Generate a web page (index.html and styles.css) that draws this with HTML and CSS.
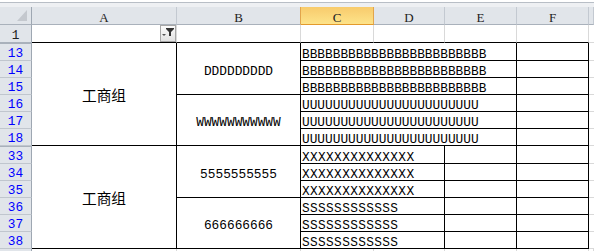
FILE: index.html
```html
<!DOCTYPE html>
<html lang="zh-CN">
<head>
    <meta charset="UTF-8">
    <meta name="viewport" content="width=device-width, initial-scale=1.0">
    <title>工作表</title>
    <link rel="stylesheet" href="styles.css">
</head>
<body>
    <div class="sheet">
        <div class="top-bar"></div>

        <!-- 列标题 -->
        <div class="col-head corner">
            <svg width="31" height="17" viewBox="0 0 31 17"><polygon points="27,3 27,14 17,14" fill="#c4c8ce"/></svg>
        </div>
        <div class="col-head">A</div>
        <div class="col-head pre-sel">B</div>
        <div class="col-head sel">C</div>
        <div class="col-head">D</div>
        <div class="col-head">E</div>
        <div class="col-head">F</div>
        <div class="col-head"></div>

        <!-- 第1行 -->
        <div class="row-head plain">1</div>
        <div class="cell-top filter-cell">
            <div class="filter-btn">
                <svg width="14" height="15" viewBox="0 0 14 15">
                    <polygon points="1,8 5,8 3,10" fill="#555"/>
                    <polygon points="5,2 13,2 13,3 10,6 10,10 8,10 8,6 5,3" fill="#333"/>
                </svg>
            </div>
        </div>
        <div class="cell-top"></div>
        <div class="cell-top"></div>
        <div class="cell-top"></div>
        <div class="cell-top"></div>
        <div class="cell-top"></div>
        <div class="grid-cell"></div>

        <!-- 13 - 18 -->
        <div class="row-head gap">13</div>
        <div class="cell mid cn rows-6">工商组</div>
        <div class="cell mid rows-3">DDDDDDDDD</div>
        <div class="cell cols-3">BBBBBBBBBBBBBBBBBBBBBBBB</div>
        <div class="cell"></div>
        <div class="grid-cell"></div>

        <div class="row-head">14</div>
        <div class="cell cols-3">BBBBBBBBBBBBBBBBBBBBBBBB</div>
        <div class="cell"></div>
        <div class="grid-cell"></div>

        <div class="row-head">15</div>
        <div class="cell cols-3">BBBBBBBBBBBBBBBBBBBBBBBB</div>
        <div class="cell"></div>
        <div class="grid-cell"></div>

        <div class="row-head">16</div>
        <div class="cell mid rows-3">WWWWWWWWWWW</div>
        <div class="cell cols-3">UUUUUUUUUUUUUUUUUUUUUUU</div>
        <div class="cell"></div>
        <div class="grid-cell"></div>

        <div class="row-head">17</div>
        <div class="cell cols-3">UUUUUUUUUUUUUUUUUUUUUUU</div>
        <div class="cell"></div>
        <div class="grid-cell"></div>

        <div class="row-head">18</div>
        <div class="cell cols-3">UUUUUUUUUUUUUUUUUUUUUUU</div>
        <div class="cell"></div>
        <div class="grid-cell"></div>

        <!-- 33 - 38 -->
        <div class="row-head gap">33</div>
        <div class="cell mid cn rows-6">工商组</div>
        <div class="cell mid rows-3">5555555555</div>
        <div class="cell cols-2 wide">XXXXXXXXXXXXXX</div>
        <div class="cell"></div>
        <div class="cell"></div>
        <div class="grid-cell"></div>

        <div class="row-head">34</div>
        <div class="cell cols-2 wide">XXXXXXXXXXXXXX</div>
        <div class="cell"></div>
        <div class="cell"></div>
        <div class="grid-cell"></div>

        <div class="row-head">35</div>
        <div class="cell cols-2 wide">XXXXXXXXXXXXXX</div>
        <div class="cell"></div>
        <div class="cell"></div>
        <div class="grid-cell"></div>

        <div class="row-head">36</div>
        <div class="cell mid rows-3">666666666</div>
        <div class="cell cols-2 wide">SSSSSSSSSSSS</div>
        <div class="cell"></div>
        <div class="cell"></div>
        <div class="grid-cell"></div>

        <div class="row-head">37</div>
        <div class="cell cols-2 wide">SSSSSSSSSSSS</div>
        <div class="cell"></div>
        <div class="cell"></div>
        <div class="grid-cell"></div>

        <div class="row-head">38</div>
        <div class="cell cols-2 wide">SSSSSSSSSSSS</div>
        <div class="cell"></div>
        <div class="cell"></div>
        <div class="grid-cell"></div>

        <!-- 底部露出的一点 -->
        <div class="row-head tail"></div>
        <div class="tail-cell"></div>
        <div class="tail-cell"></div>
        <div class="tail-cell"></div>
        <div class="tail-cell"></div>
        <div class="tail-cell"></div>
        <div class="tail-cell"></div>
        <div class="tail-cell"></div>
    </div>
</body>
</html>
```

FILE: styles.css
```css
* {
    margin: 0;
    padding: 0;
    box-sizing: border-box;
}

body {
    background: #fff;
    color: #000;
    font-family: "Liberation Mono", "Noto Sans CJK SC", monospace;
    font-size: 12.8px;
}

/* 列宽和行高按截图像素来 */
.sheet {
    display: grid;
    grid-template-columns: 32px 145px 124px 73px 71px 72px 72px 5px;
    grid-template-rows: 7px 18px 18px 18px 17px 17px 17px 17px 17px 18px 17px 17px 17px 17px 17px 2px;
    width: 594px;
    height: 251px;
    overflow: hidden;
}

.top-bar {
    grid-column: 1 / -1;
    background: linear-gradient(#fff 0 2px, #b8bec6 2px 3px, #eef0f3 3px);
}

.col-head {
    background: #e1e5ea;
    border-right: 1px solid #c3c9d1;
    border-bottom: 1px solid #a9b1bb;
    color: #222;
    font-family: "Liberation Serif", serif;
    font-size: 13px;
    display: flex;
    align-items: flex-end;
    justify-content: center;
    line-height: 11px;
    padding-bottom: 1px;
}

.col-head.pre-sel {
    border-right-color: #e2a54c;
}

.col-head.sel {
    background: linear-gradient(#f8cb6c, #fde38a);
    border-right-color: #e2a54c;
    border-bottom-color: #e39a2c;
}

.corner {
    border-right-color: #9ea7b2;
    padding: 0;
}

.row-head {
    background: #e1e5ea;
    border-right: 1px solid #9ea7b2;
    border-bottom: 1px solid #c0c6ce;
    color: #0000ff;
    display: flex;
    align-items: flex-end;
    justify-content: center;
    line-height: 11px;
    padding-bottom: 1px;
}

.row-head.plain {
    color: #222;
    border-bottom-color: #a9b1bb;
}

/* 隐藏行的分隔线 */
.row-head.gap {
    border-top: 1px solid #a9b1bb;
}

.row-head.tail {
    border-bottom: none;
}

.cell-top {
    border-right: 1px solid #d9d9d9;
    border-bottom: 1px solid #000;
}

.filter-cell {
    display: flex;
    justify-content: flex-end;
}

.filter-btn {
    width: 16px;
    height: 17px;
    border: 1px solid #a7a7a7;
    background: linear-gradient(#fbfbfb, #e2e2e2);
}

.filter-btn svg {
    display: block;
}

.cell {
    border-right: 1px solid #000;
    border-bottom: 1px solid #000;
    display: flex;
    align-items: flex-end;
    line-height: 11px;
    padding-left: 1px;
    white-space: nowrap;
    overflow: hidden;
}

.cell.wide {
    letter-spacing: 0.35px;
}

.cell.mid {
    align-items: center;
    justify-content: center;
    padding: 5px 0 0;
}

.cell.cn {
    font-family: "Noto Sans CJK SC", sans-serif;
    font-size: 14.7px;
    line-height: 15px;
    padding: 0;
}

.grid-cell {
    border-bottom: 1px solid #d9d9d9;
}

.tail-cell {
    border-right: 1px solid #d9d9d9;
}

.rows-6 {
    grid-row: span 6;
}

.rows-3 {
    grid-row: span 3;
}

.cols-3 {
    grid-column: span 3;
}

.cols-2 {
    grid-column: span 2;
}
```
